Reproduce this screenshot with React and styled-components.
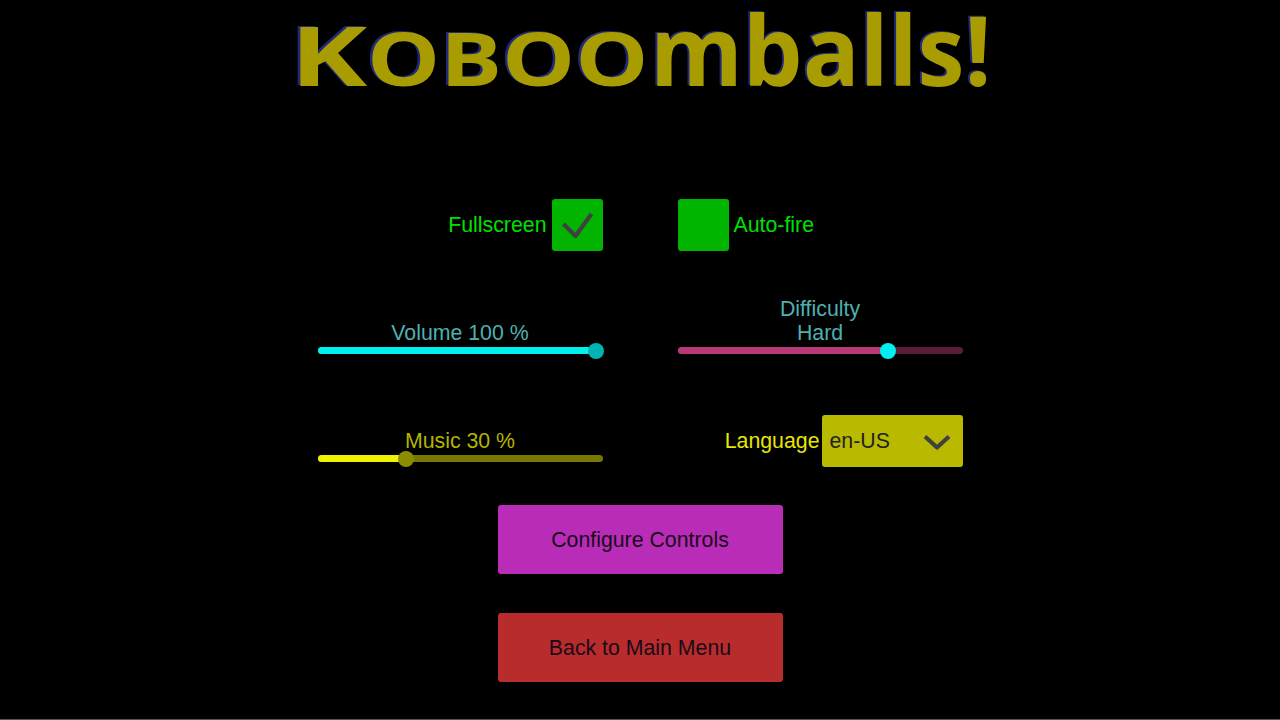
import React from 'react'
import styled, { createGlobalStyle } from 'styled-components'

const Global = createGlobalStyle`
  html, body {
    margin: 0;
    padding: 0;
    background: #000;
  }
  body {
    font-family: "Liberation Sans", Arial, sans-serif;
  }
`

const Page = styled.div`
  width: 1280px;
  height: 720px;
  overflow: hidden;
  display: flex;
  flex-direction: column;
  align-items: center;
  border-bottom: 1px solid #555;
  box-sizing: border-box;
`

const Title = styled.h1`
  height: 199px;
  width: 100%;
  box-sizing: border-box;
  margin: 0;
  padding: 0 0 0 290px;
  display: flex;
  align-items: baseline;
  font-family: "Open Sans", sans-serif;
  font-weight: 700;
  line-height: 97px;
  color: #a89c00;
  text-shadow: -2px -1px 0 #1f2a7a;
`

const TitlePart = styled.span`
  display: block;
  flex: none;
  width: ${(p) => (p.$w ? `${p.$w}px` : 'auto')};
  white-space: nowrap;
  font-size: ${(p) => p.$size}px;
  transform: scaleX(${(p) => p.$sx});
  transform-origin: left bottom;
`

const Grid = styled.div`
  width: 645px;
  display: grid;
  grid-template-columns: 285px 285px;
  column-gap: 75px;
`

const CheckRow = styled.div`
  grid-column: 1 / 3;
  height: 52px;
  display: grid;
  grid-template-columns: 285px 285px;
  column-gap: 75px;
  margin-bottom: 46px;
`

const CheckCell = styled.div`
  display: flex;
  align-items: flex-start;
  justify-content: ${(p) => (p.$end ? 'flex-end' : 'flex-start')};
  gap: 5px;
`

const CheckLabel = styled.span`
  font-size: 21.3px;
  line-height: 52px;
  color: #00e000;
`

const Box = styled.div`
  width: 51px;
  height: 51.5px;
  border-radius: 3px;
  background: #00b400;
  display: flex;
  align-items: center;
  justify-content: center;
`

const SliderCell = styled.div`
  height: ${(p) => p.$h}px;
  margin-top: ${(p) => p.$mt || 0}px;
  display: flex;
  flex-direction: column;
  justify-content: flex-end;
  align-items: stretch;
`

const SliderLabel = styled.div`
  font-size: 21.3px;
  line-height: 24px;
  margin-bottom: 2px;
  text-align: center;
  color: ${(p) => p.$color};
`

const Track = styled.div`
  position: relative;
  height: 7px;
  border-radius: 4px;
  background: ${(p) => p.$rest};
  margin-bottom: 5px;
`

const Fill = styled.div`
  height: 100%;
  border-radius: 4px;
  background: ${(p) => p.$color};
`

const Thumb = styled.div`
  position: absolute;
  top: 50%;
  width: 16px;
  height: 16px;
  border-radius: 50%;
  transform: translate(-50%, -50%);
  background: ${(p) => p.$color};
`

const LangCell = styled.div`
  display: flex;
  align-items: center;
  justify-content: flex-end;
  gap: 2px;
  height: 52px;
  margin-top: 56px;
`

const LangLabel = styled.span`
  font-size: 21.3px;
  color: #e6e600;
`

const Select = styled.div`
  width: 141px;
  height: 51.5px;
  box-sizing: border-box;
  padding: 0 12px 0 8px;
  border-radius: 3px;
  background: #b9b900;
  display: flex;
  align-items: center;
  justify-content: space-between;
  font-size: 21.3px;
  color: #222;
`

const Button = styled.div`
  width: 285px;
  height: 69px;
  box-sizing: border-box;
  padding-top: 2px;
  border-radius: 3px;
  background: ${(p) => p.$bg};
  display: flex;
  align-items: center;
  justify-content: center;
  font-size: 21.3px;
  color: #1a0a1a;
  margin-top: ${(p) => p.$mt}px;
`

const Check = () => (
  <svg width="34" height="30" viewBox="0 0 34 30">
    <path
      d="M3.5 14 L15.5 26 L31.5 4"
      fill="none"
      stroke="#404040"
      strokeWidth="4.2"
      strokeLinejoin="round"
    />
  </svg>
)

const Chevron = () => (
  <svg width="28" height="18" viewBox="0 0 28 18">
    <path
      d="M2 4.5 L14 15.5 L26 4.5"
      fill="none"
      stroke="#404040"
      strokeWidth="4.2"
      strokeLinejoin="round"
    />
  </svg>
)

const Slider = ({ value, color, rest, thumb }) => (
  <Track $rest={rest}>
    <Fill $color={color} style={{ width: `${value}%` }} />
    <Thumb $color={thumb} style={{ left: `${value}%` }} />
  </Track>
)

export default function App() {
  return (
    <Page>
      <Global />
      <Title>
        <TitlePart $w={77} $size={83} $sx={1.4}>
          K
        </TitlePart>
        <TitlePart $w={283} $size={73} $sx={1.26}>
          OBOO
        </TitlePart>
        <TitlePart $size={97} $sx={0.975}>
          mballs!
        </TitlePart>
      </Title>
      <Grid>
        <CheckRow>
          <CheckCell $end>
            <CheckLabel>Fullscreen</CheckLabel>
            <Box>
              <Check />
            </Box>
          </CheckCell>
          <CheckCell>
            <Box />
            <CheckLabel>Auto-fire</CheckLabel>
          </CheckCell>
        </CheckRow>
        <SliderCell $h={62}>
          <SliderLabel $color="#4fb0b0">Volume 100 %</SliderLabel>
          <Slider value={97.7} color="#00f0f0" rest="#007878" thumb="#00b4b4" />
        </SliderCell>
        <SliderCell $h={62}>
          <SliderLabel $color="#4fb0b0">
            Difficulty
            <br />
            Hard
          </SliderLabel>
          <Slider value={73.7} color="#b83878" rest="#5c1c3c" thumb="#00f0f0" />
        </SliderCell>
        <SliderCell $h={52} $mt={56}>
          <SliderLabel $color="#b4b400">Music 30 %</SliderLabel>
          <Slider value={31.2} color="#f0f000" rest="#787800" thumb="#8c8c00" />
        </SliderCell>
        <LangCell>
          <LangLabel>Language</LangLabel>
          <Select>
            en-US
            <Chevron />
          </Select>
        </LangCell>
      </Grid>
      <Button $bg="#b82cb8" $mt={38}>
        Configure Controls
      </Button>
      <Button $bg="#b82c2c" $mt={39}>
        Back to Main Menu
      </Button>
    </Page>
  )
}
